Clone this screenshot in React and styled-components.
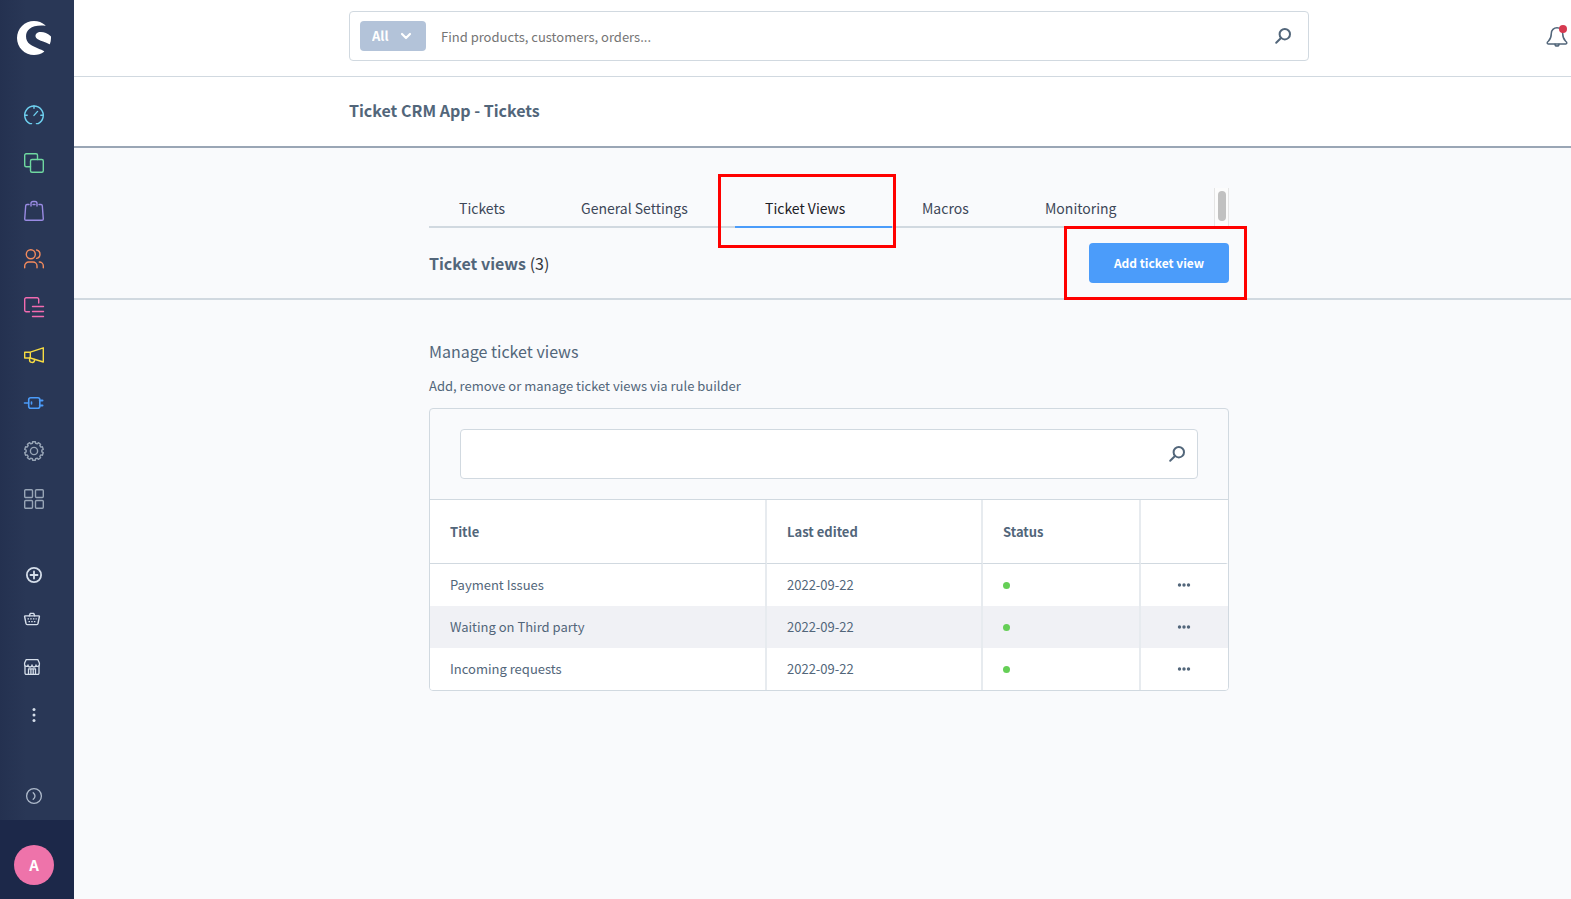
import { useState } from "react";
import styled, { createGlobalStyle, css } from "styled-components";
import { SiShopware } from "react-icons/si";

const line = "#d1d9e0";
const text = "#52667a";
const blue = "#4b9cfa";

const tabs = ["Tickets", "General Settings", "Ticket Views", "Macros", "Monitoring"];

const initialViews = [
  { title: "Payment Issues", edited: "2022-09-22" },
  { title: "Waiting on Third party", edited: "2022-09-22" },
  { title: "Incoming requests", edited: "2022-09-22" },
];

const navigation = [
  { name: "Dashboard", color: "#6ed0ef", icon: <DashboardIcon /> },
  { name: "Catalogues", color: "#6fd8a0", icon: <CatalogueIcon /> },
  { name: "Orders", color: "#9a8be4", icon: <BagIcon /> },
  { name: "Customers", color: "#f38b5d", icon: <CustomersIcon /> },
  { name: "Content", color: "#f26bb0", icon: <ContentIcon /> },
  { name: "Marketing", color: "#f7dc42", icon: <MegaphoneIcon /> },
  { name: "Extensions", color: "#4b9cfa", icon: <PlugIcon /> },
  { name: "Settings", color: "#98a5b6", icon: <GearIcon /> },
  { name: "Apps", color: "#98a5b6", icon: <GridIcon /> },
];

export default function App() {
  const [active, setActive] = useState("Ticket Views");
  const [query, setQuery] = useState("");

  const views = initialViews.filter(({ title }) =>
    title.toLowerCase().includes(query.toLowerCase())
  );

  return (
    <>
      <GlobalStyle />
      <Layout>
        <Sidebar>
          <Logo>
            <SiShopware size={34} />
          </Logo>
          <Navigation>
            {navigation.map(({ name, color, icon }) => (
              <NavLink key={name} href="#" aria-label={name} color={color}>
                {icon}
              </NavLink>
            ))}
          </Navigation>
          <Channels>
            <SideButton aria-label="Add sales channel" short>
              <PlusIcon />
            </SideButton>
            <SideButton aria-label="Headless" shifted>
              <BasketIcon />
            </SideButton>
            <SideButton aria-label="Storefront" shifted>
              <StoreIcon />
            </SideButton>
            <SideButton aria-label="More">
              <MoreIcon />
            </SideButton>
          </Channels>
          <Collapse aria-label="Collapse menu">
            <CollapseIcon />
          </Collapse>
          <User>
            <Avatar>A</Avatar>
          </User>
        </Sidebar>

        <Page>
          <Header>
            <GlobalSearch>
              <Scope>
                <ScopeSelect aria-label="Search in">
                  <option>All</option>
                </ScopeSelect>
                <Chevron />
              </Scope>
              <SearchInput
                aria-label="Search"
                placeholder="Find products, customers, orders..."
              />
              <SearchIcon />
            </GlobalSearch>
            <Bell aria-label="Notifications">
              <BellIcon />
            </Bell>
          </Header>

          <TitleBar>
            <PageTitle>Ticket CRM App - Tickets</PageTitle>
          </TitleBar>

          <Toolbar>
            <Column>
              <Tabs>
                {tabs.map((name) => (
                  <Tab
                    key={name}
                    active={name === active}
                    onClick={() => setActive(name)}
                  >
                    {name}
                    {name === "Ticket Views" && <TabMarker />}
                  </Tab>
                ))}
                <ScrollTrack>
                  <ScrollThumb />
                </ScrollTrack>
              </Tabs>
              <Actions>
                <ViewsTitle>
                  Ticket views <Count>(3)</Count>
                </ViewsTitle>
                <AddButton>
                  Add ticket view
                  <ButtonMarker />
                </AddButton>
              </Actions>
            </Column>
          </Toolbar>

          <Content>
            <Column>
              <Heading>Manage ticket views</Heading>
              <Description>
                Add, remove or manage ticket views via rule builder
              </Description>
              <Card>
                <CardSearch>
                  <CardSearchBox>
                    <SearchInput
                      aria-label="Search ticket views"
                      value={query}
                      onChange={(e) => setQuery(e.target.value)}
                    />
                    <SearchIcon />
                  </CardSearchBox>
                </CardSearch>
                <Table>
                  <colgroup>
                    <col width="337" />
                    <col width="216" />
                    <col width="158" />
                    <col />
                  </colgroup>
                  <thead>
                    <tr>
                      <HeadCell>Title</HeadCell>
                      <HeadCell>Last edited</HeadCell>
                      <HeadCell>Status</HeadCell>
                      <HeadCell aria-label="Actions" />
                    </tr>
                  </thead>
                  <tbody>
                    {views.map(({ title, edited }) => (
                      <Row key={title}>
                        <Cell>{title}</Cell>
                        <Cell>{edited}</Cell>
                        <Cell>
                          <Status aria-label="Active" />
                        </Cell>
                        <Cell>
                          <RowMenu aria-label={`Actions for ${title}`}>
                            <DotsIcon />
                          </RowMenu>
                        </Cell>
                      </Row>
                    ))}
                  </tbody>
                </Table>
              </Card>
            </Column>
          </Content>
        </Page>
      </Layout>
    </>
  );
}

// Icons
function DashboardIcon() {
  return (
    <Icon size={20}>
      <path d="M7.6 18.6H5.8A9.3 9.3 0 1 1 14.2 18.6H12.4" />
      <path d="M10 1v2.200M1 10.300h2.200M19 10.300h-2.200M10 10.400l3.600-4" />
    </Icon>
  );
}

function CatalogueIcon() {
  return (
    <Icon size={20}>
      <path d="M6.5 13.7H2.2A1.5 1.5 0 0 1 .7 12.2V2.2A1.5 1.5 0 0 1 2.2.7H12A1.5 1.5 0 0 1 13.5 2.2V6.5" />
      <rect x="6.5" y="6.5" width="12.8" height="12.8" rx="1.5" />
    </Icon>
  );
}

function BagIcon() {
  return (
    <Icon size={20}>
      <path d="M5 3.5H3A1.3 1.3 0 0 0 1.7 4.7L.7 18A1.3 1.3 0 0 0 2 19.3H18A1.3 1.3 0 0 0 19.3 18L18.3 4.7A1.3 1.3 0 0 0 17 3.5H15M9 3.5H11" />
      <path d="M7 5V2.5A2 2 0 0 1 9 .5H11A2 2 0 0 1 13 2.5V5" />
    </Icon>
  );
}

function CustomersIcon() {
  return (
    <Icon size={20}>
      <circle cx="6.8" cy="5.2" r="4.5" />
      <path d="M12.6 1A4.3 4.3 0 0 1 12.6 9.4" />
      <path d="M.7 18.8V17A4 4 0 0 1 4.700 13H9A4 4 0 0 1 13 17V18.8M15.3 13A4 4 0 0 1 19.3 17V18.8" />
    </Icon>
  );
}

function ContentIcon() {
  return (
    <Icon size={20}>
      <path d="M5.5 14.7H2.2A1.5 1.5 0 0 1 .7 13.2V2.2A1.5 1.5 0 0 1 2.2.7H13.2A1.5 1.5 0 0 1 14.7 2.2V6M8.500 9.500H19.500M8.500 14.500H19.500M8.500 19.500H19.500" />
    </Icon>
  );
}

function MegaphoneIcon() {
  return (
    <Icon size={20}>
      <path d="M6.3 7.2L19.3 2.8V17L6.3 13ZM6.3 7.2H.7V13H6.3" />
      <path d="M5.6 13V14.6A2.5 2.5 0 0 0 10.6 15.2V14.4" />
    </Icon>
  );
}

function PlugIcon() {
  return (
    <Icon size={20} strokeWidth="1.6">
      <path d="M.5 10H4.500M7.500 9V11" />
      <path d="M6.700 4.700H13.800A2 2 0 0 1 15.800 6.700V13.300A2 2 0 0 1 13.800 15.300H6.700A2 2 0 0 1 4.700 13.300V6.700A2 2 0 0 1 6.700 4.700Z" />
      <path strokeWidth="2" d="M15.800 7.500H18.500M15.800 12.500H18.500" />
    </Icon>
  );
}

function GearIcon() {
  // ten teeth around a ring
  const teeth = 10;
  const points = [];
  for (let i = 0; i < teeth; i++) {
    [
      [-0.2, 7.9],
      [-0.15, 9.4],
      [0.15, 9.4],
      [0.2, 7.9],
    ].forEach(([offset, radius]) => {
      const angle = (i / teeth) * Math.PI * 2 + offset;
      points.push(
        `${10 + Math.sin(angle) * radius},${10 - Math.cos(angle) * radius}`
      );
    });
  }
  return (
    <Icon size={20}>
      <polygon points={points.join(" ")} />
      <circle cx="10" cy="10" r="3.6" />
    </Icon>
  );
}

function GridIcon() {
  return (
    <Icon size={20}>
      <rect x=".7" y=".7" width="7.8" height="7.8" rx="1" />
      <rect x="11.5" y=".7" width="7.8" height="7.8" rx="1" />
      <rect x=".7" y="11.5" width="7.8" height="7.8" rx="1" />
      <rect x="11.5" y="11.5" width="7.8" height="7.8" rx="1" />
    </Icon>
  );
}

function PlusIcon() {
  return (
    <Icon size={16} strokeWidth="1.8">
      <circle cx="8" cy="8" r="7.1" />
      <path d="M8 4.500V11.500M4.500 8H11.500" />
    </Icon>
  );
}

function BasketIcon() {
  return (
    <Icon size={16}>
      <path d="M1 4.900H15A.5.5 0 0 1 15.400 5.500L14 12.500A1.300 1.300 0 0 1 12.700 13.600H3.300A1.300 1.300 0 0 1 2 12.500L.6 5.500A.5.5 0 0 1 1 4.900Z" />
      <path d="M5.300 4.900L6.200 2.400H9.800L10.700 4.900" />
      <path
        strokeWidth="1.200"
        strokeLinecap="butt"
        strokeDasharray="1.500 1.200"
        d="M3.500 7.900H12.700M4.500 10.700H11.700"
      />
    </Icon>
  );
}

function StoreIcon() {
  return (
    <Icon size={16} strokeWidth="1.3">
      <path d="M1 7V14A1.3 1.3 0 0 0 2.300 15.400H13.700A1.3 1.3 0 0 0 15 14V7" />
      <path d="M2.200.6H13.800L15.400 4V5.400A1.500 1.500 0 0 1 12 6 2 2 0 0 1 8 6 2 2 0 0 1 4 6 1.500 1.500 0 0 1 .6 5.400V4Z" />
      <path d="M4.500 15.400V9.800H11.500V15.400M6.900 9.800V15.400M9.200 9.800V15.400" />
    </Icon>
  );
}

function MoreIcon() {
  return (
    <Icon size={16} filled>
      <circle cx="8" cy="2.600" r="1.500" />
      <circle cx="8" cy="8" r="1.500" />
      <circle cx="8" cy="13.400" r="1.500" />
    </Icon>
  );
}

function CollapseIcon() {
  return (
    <Icon size={16} strokeWidth="1.3">
      <circle cx="8" cy="8" r="7.4" />
      <path d="M7.200 4.700Q10.800 8 7.200 11.300" />
    </Icon>
  );
}

function Chevron() {
  return (
    <ChevronSvg size={10} strokeWidth="2.2">
      <path d="M1 3L5 7L9 3" />
    </ChevronSvg>
  );
}

function SearchIcon() {
  return (
    <Icon size={16} strokeWidth="2">
      <circle cx="9.800" cy="6.200" r="5.200" />
      <path d="M6 10L1.200 14.800" />
    </Icon>
  );
}

function BellIcon() {
  return (
    <Icon size={22} strokeWidth="1.5">
      <path d="M11 3.700A5.700 5.700 0 0 0 5.300 9.400C5.300 15 3.800 15.500 1.500 18.100C.9 19 1.200 19.900 2.200 19.900H19.800C20.800 19.900 21.100 19 20.500 18.100C18.200 15.500 16.700 15 16.700 9.400A5.700 5.700 0 0 0 11 3.700Z" />
      <path d="M9 20.200A2 1.800 0 0 0 13 20.200" />
      <circle cx="17" cy="5" r="4" fill="#d63a50" stroke="none" />
    </Icon>
  );
}

function DotsIcon() {
  return (
    <Icon size={14} filled>
      <circle cx="2.500" cy="7" r="1.700" />
      <circle cx="7" cy="7" r="1.700" />
      <circle cx="11.500" cy="7" r="1.700" />
    </Icon>
  );
}

const GlobalStyle = createGlobalStyle`
  * {
    box-sizing: border-box;
  }

  body {
    margin: 0;
    background: #f9fafc;
    color: ${text};
    font-family: "Noto Sans CJK SC", "Noto Sans", sans-serif;
    font-size: 13px;
    line-height: 20px;
  }

  button,
  input,
  select {
    font: inherit;
    color: inherit;
    border: 0;
    background: none;
    padding: 0;
    outline: 0;
  }

  button {
    cursor: pointer;
  }
`;

const Icon = styled.svg
  .attrs(({ size, strokeWidth = "1.4" }) => ({
    viewBox: `0 0 ${size} ${size}`,
    strokeWidth,
  }))
  .withConfig({
    shouldForwardProp: (prop) => !["size", "filled"].includes(prop),
  })`
  width: ${({ size }) => size}px;
  height: ${({ size }) => size}px;
  flex: none;
  display: block;
  overflow: visible;
  fill: ${({ filled }) => (filled ? "currentColor" : "none")};
  stroke: ${({ filled }) => (filled ? "none" : "currentColor")};
  stroke-linecap: round;
  stroke-linejoin: round;
`;

const ChevronSvg = styled(Icon)`
  position: absolute;
  right: 15px;
  top: 10px;
  color: #ffffff;
  pointer-events: none;
`;

const Layout = styled.div`
  display: flex;
  min-height: 100vh;
`;

const Sidebar = styled.aside`
  width: 74px;
  flex: none;
  display: flex;
  flex-direction: column;
  background: linear-gradient(90deg, #243150, #293756 35%);
`;

const sideItem = css`
  display: flex;
  align-items: center;
  height: 48px;
  padding-left: 24px;
`;

const Logo = styled.div`
  height: 91px;
  padding: 21px 17px;
  color: #ffffff;
`;

const Navigation = styled.nav``;

const NavLink = styled.a`
  ${sideItem}
  color: ${({ color }) => color};
`;

const Channels = styled.div`
  margin-top: 32px;
`;

const SideButton = styled.button.withConfig({
  shouldForwardProp: (prop) => !["short", "shifted"].includes(prop),
})`
  ${sideItem}
  width: 100%;
  height: ${({ short }) => (short ? 40 : 48)}px;
  padding-left: ${({ shifted }) => (shifted ? 24 : 26)}px;
  color: #d5deea;
`;

const Collapse = styled(SideButton)`
  margin-top: auto;
  color: #aebacb;
`;

const User = styled.div`
  height: 79px;
  display: flex;
  align-items: center;
  padding: 11px 14px 0;
  background: #1c2849;
`;

const Avatar = styled.div`
  width: 40px;
  height: 40px;
  border-radius: 50%;
  background: #ee73aa;
  color: #ffffff;
  font-size: 15px;
  font-weight: 600;
  line-height: 40px;
  text-align: center;
`;

const Page = styled.main`
  flex: 1;
  min-width: 0;
`;

const Header = styled.header`
  height: 77px;
  display: grid;
  grid-template-columns: 1fr minmax(0, 960px) 1fr;
  padding: 11px 0 0 13px;
  background: #ffffff;
  border-bottom: 1px solid ${line};
`;

const GlobalSearch = styled.div`
  grid-column: 2;
  height: 50px;
  display: flex;
  align-items: center;
  padding: 0 17px 0 10px;
  border: 1px solid ${line};
  border-radius: 4px;
`;

const Scope = styled.div`
  position: relative;
  margin-right: 15px;
`;

const ScopeSelect = styled.select`
  appearance: none;
  display: block;
  width: 66px;
  height: 30px;
  padding-left: 12px;
  border-radius: 4px;
  background: #b3c3d9;
  color: #ffffff;
  font-weight: 600;
`;

const SearchInput = styled.input`
  flex: 1;
  min-width: 0;
  height: 100%;

  &::placeholder {
    color: #757575;
  }
`;

const Bell = styled.button`
  justify-self: end;
  align-self: start;
  padding: 13px 3px 0 0;
  color: ${text};
`;

const TitleBar = styled.div`
  display: flex;
  justify-content: center;
  padding: 21px 0 23px 13px;
  background: #ffffff;
  border-bottom: 2px solid #9aa6b5;
`;

const PageTitle = styled.h1`
  flex: 0 1 960px;
  margin: 0;
  font-size: 16px;
  font-weight: 600;
  line-height: 25px;
`;

const Toolbar = styled.div`
  padding: 40px 0 0 13px;
  border-bottom: 2px solid ${line};
`;

const Column = styled.div`
  max-width: 800px;
  margin: 0 auto;
`;

const Tabs = styled.div`
  display: grid;
  grid-template-columns: 122px 184px 157px 123px auto 1fr;
  height: 40px;
  border-bottom: 2px solid ${line};
`;

const Tab = styled.button.withConfig({
  shouldForwardProp: (prop) => prop !== "active",
})`
  position: relative;
  height: 40px;
  padding: 2px 0 0 30px;
  font-size: 14px;
  text-align: left;
  color: ${({ active }) => (active ? "#1c2026" : "#3d4758")};
  border-bottom: 2px solid ${({ active }) => (active ? blue : "transparent")};
  white-space: nowrap;
`;

const Marker = styled.span`
  position: absolute;
  border: 3px solid #ff0000;
  pointer-events: none;
  z-index: 1;
`;

const TabMarker = styled(Marker)`
  inset: -14px -4px -22px -17px;
`;

const ScrollTrack = styled.div`
  width: 15px;
  justify-self: end;
  padding: 3px 3px 0;
  background: #fcfcfc;
  border: solid #e5e5e5;
  border-width: 0 1px;
`;

const ScrollThumb = styled.div`
  width: 8px;
  height: 30px;
  border-radius: 4px;
  background: #c1c1c1;
`;

const Actions = styled.div`
  height: 70px;
  display: flex;
  align-items: center;
  justify-content: space-between;
`;

const ViewsTitle = styled.h2`
  margin: 0;
  font-size: 16px;
  font-weight: 600;
`;

const Count = styled.span`
  color: #34373c;
  font-weight: 400;
`;

const AddButton = styled.button`
  position: relative;
  width: 140px;
  height: 40px;
  border-radius: 4px;
  background: ${blue};
  color: #ffffff;
  font-size: 12px;
  font-weight: 600;
`;

const ButtonMarker = styled(Marker)`
  inset: -17px -18px -17px -25px;
`;

const Content = styled.section`
  padding: 39px 0 40px 13px;
`;

const Heading = styled.h3`
  margin: 0 0 13px;
  font-size: 16px;
  font-weight: 400;
  line-height: 24px;
`;

const Description = styled.p`
  margin: 0 0 12px;
`;

const Card = styled.div`
  border: 1px solid ${line};
  border-radius: 4px;
  overflow: hidden;
`;

const CardSearch = styled.div`
  padding: 20px 30px;
  border-bottom: 1px solid ${line};
`;

const CardSearchBox = styled.div`
  height: 50px;
  display: flex;
  align-items: center;
  padding: 0 12px 0 16px;
  background: #ffffff;
  border: 1px solid ${line};
  border-radius: 4px;
`;

const Table = styled.table`
  width: 100%;
  table-layout: fixed;
  border-collapse: separate;
  border-spacing: 0;
  background: #ffffff;
`;

const cell = css`
  padding: 0 20px;
  text-align: left;
  border-right: 2px solid #e7ebef;

  &:last-child {
    border-right-color: transparent;
  }
`;

const HeadCell = styled.th`
  ${cell}
  height: 64px;
  border-bottom: 1px solid ${line};
  font-weight: 700;
`;

const Cell = styled.td`
  ${cell}
  height: 42px;
`;

const Row = styled.tr`
  &:nth-child(even) {
    background: #f0f1f5;
  }
`;

const Status = styled.span`
  display: block;
  width: 7px;
  height: 7px;
  border-radius: 50%;
  background: #65cf56;
`;

const RowMenu = styled.button`
  display: block;
  margin: 0 auto;
`;
